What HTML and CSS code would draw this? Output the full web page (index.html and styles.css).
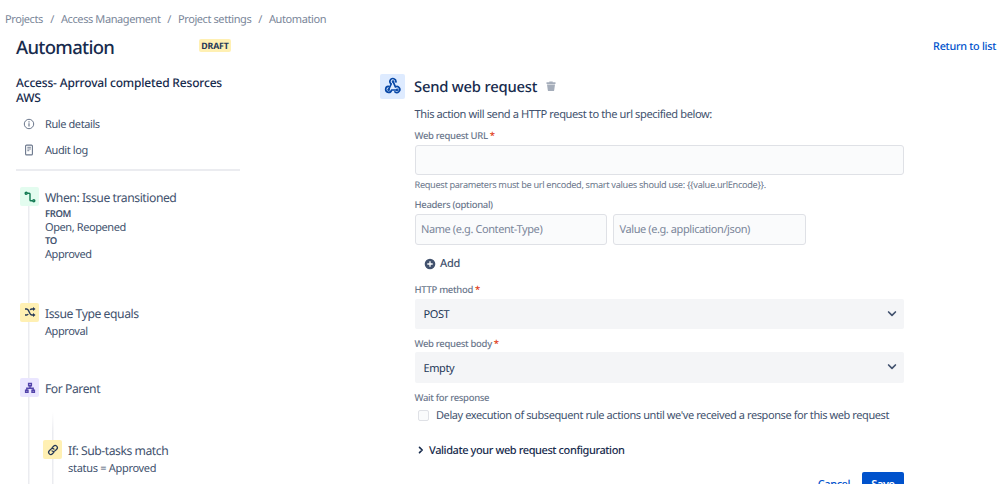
FILE: index.html
```html
<!DOCTYPE html>
<html lang="en">
<head>
<meta charset="utf-8">
<title>Automation</title>
<link rel="stylesheet" href="styles.css">
</head>
<body>
<nav class="crumbs"><span class="c1">Projects</span><i>/</i><span class="c2">Access Management</span><i>/</i><span class="c3">Project settings</span><i>/</i><span class="c4">Automation</span></nav>
<div class="page">
  <aside class="sidebar">
    <header class="side-head"><h1>Automation</h1><span class="badge">DRAFT</span></header>
    <h2 class="rule-name">Access- Aprroval completed Resorces<br>AWS</h2>
    <div class="menu-item">
      <svg width="12" height="12" viewBox="0 0 12 12" fill="none" stroke="#6b778c"><circle cx="6" cy="6" r="4.7"/><path d="M6 5.2v3.2M6 3.2v1.2" stroke-width="1.2"/></svg>
      <span>Rule details</span>
    </div>
    <div class="menu-item">
      <svg width="12" height="12" viewBox="0 0 12 12" fill="none" stroke="#6b778c"><rect x="2.6" y="1.1" width="6.8" height="9.8" rx="1" stroke-width="1.1"/><path d="M4.3 3.3h3.6M4.3 5h3.6M4.3 6.7h2" stroke-width=".9"/></svg>
      <span>Audit log</span>
    </div>
    <hr>
    <section class="tree">
      <div class="step when">
        <div class="tile green"><svg width="12" height="12" viewBox="0 0 12 12" fill="none" stroke="#137a53" stroke-width="1.4"><circle cx="2.2" cy="2.2" r="1"/><circle cx="9.8" cy="9.8" r="1"/><path d="M3.2 2.2H5.2Q6 2.2 6 3V9Q6 9.8 6.8 9.8H8.8"/></svg></div>
        <div class="info"><h3>When: Issue transitioned</h3><b>FROM</b><p>Open, Reopened</p><b>TO</b><p>Approved</p></div>
      </div>
      <div class="step type">
        <div class="tile yellow"><svg width="12" height="12" viewBox="0 0 12 12" fill="none" stroke="#253858" stroke-width="1.4"><path d="M1 3h1.6q1 0 1.7 1.2l1.8 3.6Q6.7 9 7.9 9H10M1 9h1.6q1 0 1.6-1M6.2 4q.6-1 1.6-1H10"/><path d="M9 1 11.5 3 9 5zM9 7 11.5 9 9 11z" fill="#253858" stroke="none"/></svg></div>
        <div class="info"><h3>Issue Type equals</h3><p>Approval</p></div>
      </div>
      <div class="step parent">
        <div class="tile purple"><svg width="12" height="12" viewBox="0 0 12 12" fill="none" stroke="#5243aa" stroke-width="1.4"><path d="M4.6 1.5h2.8v2.2H4.6zM1.6 8.3h2.4v2H1.6zM8 8.3h2.4v2H8zM6 3.9V6.2M2.8 8V6.2h6.4V8"/></svg></div>
        <div class="info"><h3>For Parent</h3></div>
      </div>
      <div class="branch">
        <div class="step">
          <div class="tile yellow"><svg width="12" height="12" viewBox="0 0 12 12" fill="none" stroke="#253858" stroke-width="1.3" stroke-linecap="round"><path d="M5.2 3.6 6.6 2.2a2.1 2.1 0 0 1 3.1 3L8 6.9a2.1 2.1 0 0 1-3 0M6.8 8.4 5.4 9.8a2.1 2.1 0 0 1-3.1-3L4 5.1a2.1 2.1 0 0 1 3 0"/></svg></div>
          <div class="info"><h3>If: Sub-tasks match</h3><p class="status">status = Approved</p></div>
        </div>
      </div>
    </section>
  </aside>
  <main class="content">
    <a class="return">Return to list</a>
    <header class="main-head">
      <div class="hook"><svg width="18" height="18" viewBox="0 0 18 18" fill="none" stroke="#0747a6" stroke-width="1.7" stroke-linecap="round" stroke-linejoin="round"><path d="M11.9 5A3 3 0 1 0 7.2 7L4.8 12.2"/><path d="M4.4 9.4A3 3 0 1 0 7.6 13H13"/><path d="M9.2 4.9 11.4 9.9A3 3 0 1 1 10.9 14.9"/><circle cx="9.1" cy="4.6" r=".5"/><circle cx="4.6" cy="12.8" r=".5"/><circle cx="13.3" cy="12.9" r=".5"/></svg></div>
      <h2>Send web request</h2>
      <svg class="trash" width="10" height="11" viewBox="0 0 10 11" fill="#a5adba"><path d="M.5 1.3h2.8V.5h3.4v.8h2.8V3h-9zM1 3.6h8L8.2 9.2q-.1.9-1 .9H2.8q-.9 0-1-.9z"/></svg>
    </header>
    <form class="form">
      <p class="intro">This action will send a HTTP request to the url specified below:</p>
      <label class="url">Web request URL<em>*</em></label>
      <div class="field"></div>
      <p class="help">Request parameters must be url encoded, smart values should use: {{value.urlEncode}}.</p>
      <label class="headers">Headers (optional)</label>
      <div class="pair"><div class="field">Name (e.g. Content-Type)</div><div class="field">Value (e.g. application/json)</div></div>
      <div class="add"><svg width="12" height="12" viewBox="0 0 12 12"><circle cx="6" cy="6" r="5.3" fill="#42526e"/><path d="M6 3.3v5.4M3.3 6h5.4" stroke="#fff" stroke-width="1.3"/></svg><span>Add</span></div>
      <label class="method">HTTP method<em>*</em></label>
      <div class="select"><span>POST</span><svg width="10" height="8" viewBox="0 0 10 8" fill="none" stroke="#42526e" stroke-width="1.7" stroke-linecap="round" stroke-linejoin="round"><path d="M1.6 2 5 5.3 8.4 2"/></svg></div>
      <label class="body">Web request body<em>*</em></label>
      <div class="select"><span>Empty</span><svg width="10" height="8" viewBox="0 0 10 8" fill="none" stroke="#42526e" stroke-width="1.7" stroke-linecap="round" stroke-linejoin="round"><path d="M1.6 2 5 5.3 8.4 2"/></svg></div>
      <label class="wait">Wait for response</label>
      <div class="check"><i></i><span>Delay execution of subsequent rule actions until we've received a response for this web request</span></div>
      <div class="validate"><svg width="6" height="8" viewBox="0 0 6 8" fill="none" stroke="#172b4d" stroke-width="1.6" stroke-linecap="round" stroke-linejoin="round"><path d="M1.5 1.4 4.2 4 1.5 6.6"/></svg><span>Validate your web request configuration</span></div>
      <div class="actions"><a>Cancel</a><div class="save">Save</div></div>
    </form>
  </main>
</div>
</body>
</html>
```
FILE: styles.css
```css
* { box-sizing: border-box; margin: 0; padding: 0; }
html, body { height: 484px; overflow: hidden; background: #fff; }
body { font-family: "Noto Sans", "Open Sans", sans-serif; font-size: 11px; letter-spacing: -.41px; color: #42526e; white-space: nowrap; text-rendering: geometricPrecision; }
i, em { font-style: normal; }
svg { display: block; flex: none; }

.crumbs { display: flex; height: 28px; padding: 12px 0 0 5px; font-size: 11px; line-height: 16px; color: #7a8699; }
.crumbs i { width: 18px; text-align: center; }
.crumbs .c1 { width: 38px; }
.crumbs .c2 { width: 99px; }
.crumbs .c3 { width: 73px; }

.page { display: flex; height: 456px; }
.sidebar { width: 240px; flex: none; padding-left: 16px; }
.side-head { display: flex; height: 48px; }
h1 { width: 183px; padding-top: 7px; font-size: 18.5px; line-height: 26px; font-weight: 500; letter-spacing: -.7px; color: #172b4d; }
.badge { width: 32px; height: 13px; margin-top: 11px; border-radius: 2px; background: #fff0b3; font-size: 8.8px; line-height: 14px; font-weight: 700; letter-spacing: -.15px; text-align: center; color: #253858; }
.rule-name { height: 36px; margin: -1px 0 0; font-size: 12px; line-height: 15px; font-weight: 500; letter-spacing: -.18px; color: #172b4d; }
.menu-item { display: flex; align-items: center; gap: 10px; height: 26px; padding-left: 7px; }
hr { height: 2px; margin-top: 6px; border: 0; background: #ebecf0; }

.tree { height: 315px; margin-top: 16px; padding-left: 4px; background: linear-gradient(#ebecf0, #ebecf0) 12px 0 / 1.5px 100% no-repeat; }
.step { display: flex; gap: 6px; }
.when { height: 115.5px; }
.type { height: 75.5px; }
.parent { height: 34px; }
.tile { display: flex; align-items: center; justify-content: center; flex: none; width: 19px; height: 19px; border-radius: 2px; }
.green { background: #e3fcef; }
.yellow { background: #fff0b3; }
.purple { background: #eae6ff; }
h3 { height: 20px; font-size: 12.2px; line-height: 22px; font-weight: 400; letter-spacing: -.46px; }
.when h3 { line-height: 21px; }
.info b { display: block; font-size: 9.5px; line-height: 13.5px; font-weight: 600; letter-spacing: -.4px; }
.info p { padding-top: 2px; line-height: 14px; }
.when p { padding: 0; line-height: 13.5px; }
.info .status { letter-spacing: -.3px; }
.branch { height: 90px; margin-left: 23px; padding-top: 28px; background: linear-gradient(#fff, #ebecf0 20px) 9px 0 / 1.5px 100% no-repeat; }

.content { width: 759px; padding-left: 140px; }
.return { display: block; height: 45px; padding: 11px 3px 0 0; text-align: right; font-size: 10.8px; line-height: 16px; font-weight: 500; letter-spacing: -.28px; color: #0052cc; }
.main-head { display: flex; align-items: center; height: 26px; }
.hook { display: flex; align-items: center; justify-content: center; width: 25px; height: 25px; border-radius: 2px; background: #deebff; }
.main-head h2 { width: 123px; margin: 0 8.5px 0 9px; font-size: 14.8px; line-height: 26px; padding-top: 1px; font-weight: 500; letter-spacing: -.22px; color: #172b4d; }
.form { width: 489.5px; margin-left: 34.5px; }
.intro { height: 29px; padding-top: 7px; font-size: 11.1px; line-height: 18px; }
.form label { display: flex; height: 15.5px; font-size: 9.5px; line-height: 14px; font-weight: 500; letter-spacing: -.32px; color: #6b778c; }
.form em { margin-left: 2px; color: #de350b; }
.form .url { height: 16.5px; padding-top: 1px; }
.form .headers { height: 16.5px; padding-top: .5px; }
.form .body { margin-top: 7.5px; }
.form .wait { height: 16px; margin-top: 8px; }
.field { height: 30.5px; border: 1.5px solid #dfe1e6; border-radius: 3px; background: #fafbfc; padding-left: 5.5px; line-height: 29.5px; color: #7a869a; }
.help { height: 22.5px; padding-top: 3px; font-size: 9.2px; line-height: 14px; letter-spacing: -.32px; color: #6b778c; }
.pair { display: flex; gap: 6px; }
.pair .field { width: 192.5px; height: 30.5px; }
.add { display: flex; align-items: center; gap: 4px; height: 38.5px; padding-left: 9.5px; font-weight: 500; letter-spacing: -.2px; }
.select { display: flex; align-items: center; justify-content: space-between; height: 30.5px; padding: 0 7.5px 0 9px; border-radius: 2px; background: #f4f5f7; color: #253858; }
.select span { padding-top: 1.5px; }
.check { display: flex; align-items: center; height: 17px; }
.check i { flex: none; width: 11px; height: 11px; margin: 0 7px 0 3.5px; border: 1.5px solid #dfe1e6; border-radius: 2px; background: #fafbfc; }
.validate { display: flex; align-items: center; gap: 5.5px; height: 18px; margin-top: 17.5px; padding-left: 3px; font-weight: 500; color: #172b4d; }
.actions { display: flex; justify-content: flex-end; margin-top: 13px; line-height: 26px; font-weight: 500; }
.actions a { margin-right: 12px; color: #0052cc; letter-spacing: -.45px; }
.save { width: 42px; height: 25px; border-radius: 2px; background: #0052cc; color: #fff; text-align: center; font-weight: 600; }
```
